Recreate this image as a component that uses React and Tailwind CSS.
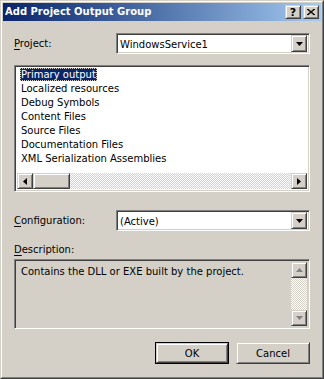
import { useState } from "react";

const items = [
  "Primary output",
  "Localized resources",
  "Debug Symbols",
  "Content Files",
  "Source Files",
  "Documentation Files",
  "XML Serialization Assemblies",
];

const raised =
  "border border-t-[#d4d0c8] border-l-[#d4d0c8] border-b-[#404040] border-r-[#404040] shadow-[inset_1px_1px_#fff,inset_-1px_-1px_#808080] bg-[#d4d0c8]";
const sunken =
  "border border-t-[#808080] border-l-[#808080] border-b-white border-r-white shadow-[inset_1px_1px_#404040,inset_-1px_-1px_#d4d0c8]";
const track =
  "[background-image:repeating-conic-gradient(#d4d0c8_0_25%,#fff_0_50%)] [background-size:2px_2px]";

const Arrow = ({ dir, disabled }) => {
  const pts = {
    down: "0,0 7,0 3.5,4",
    up: "0,4 7,4 3.5,0",
    left: "4,0 4,7 0,3.5",
    right: "0,0 0,7 4,3.5",
  }[dir];
  const vertical = dir === "up" || dir === "down";
  return (
    <svg width={vertical ? 7 : 4} height={vertical ? 4 : 7} className="block">
      <polygon points={pts} fill={disabled ? "#808080" : "#000"} />
    </svg>
  );
};

const ArrowButton = ({ dir, disabled, className = "" }) => (
  <div className={`${raised} w-[16px] h-[16px] flex items-center justify-center shrink-0 ${className}`}>
    <Arrow dir={dir} disabled={disabled} />
  </div>
);

const Combo = ({ value }) => (
  <div className={`${sunken} bg-white w-[194px] h-[21px] flex items-center pl-[3px] pr-[2px]`}>
    <span className="flex-1 pt-[1px]">{value}</span>
    <ArrowButton dir="down" className="h-[17px]" />
  </div>
);

const Label = ({ k, rest }) => (
  <span>
    <span className="underline underline-offset-2">{k}</span>
    {rest}
  </span>
);

export default function App() {
  const [selected, setSelected] = useState(0);

  return (
    <div
      className="w-[324px] h-[379px] bg-[#d4d0c8] border border-t-[#d4d0c8] border-l-[#d4d0c8] border-b-[#404040] border-r-[#404040] text-black text-[10px]"
      style={{ fontFamily: '"DejaVu Sans", Verdana, sans-serif' }}
    >
      <div className="h-full border border-t-white border-l-white border-b-[#808080] border-r-[#808080] p-[1px] flex flex-col">
        {/* title bar */}
        <div className="h-[18px] flex items-center bg-linear-to-r from-[#0a246a] to-[#a6caf0] pl-[2px] pr-[2px]">
          <span className="flex-1 text-white font-bold text-[10px] leading-none">Add Project Output Group</span>
          <div className={`${raised} w-[16px] h-[14px] flex items-center justify-center font-bold text-[11px] leading-none`}>?</div>
          <div className={`${raised} w-[16px] h-[14px] flex items-center justify-center ml-[2px]`}>
            <svg width="8" height="7" className="block">
              <path d="M0 0L7 6M1 0L8 6M7 0L0 6M8 0L1 6" stroke="#000" strokeWidth="1" />
            </svg>
          </div>
        </div>

        <div className="flex-1 px-[11px]">
          {/* project */}
          <div className="flex items-center mt-[12px]">
            <div className="w-[102px]">
              <Label k="P" rest="roject:" />
            </div>
            <Combo value="WindowsService1" />
          </div>

          {/* output list */}
          <div className={`${sunken} bg-white mt-[11px] h-[127px] p-[2px] flex flex-col`}>
            <div className="flex-1 pl-[3px] -mt-[1px]">
              {items.map((it, i) => (
                <div key={it} className="h-[14px] flex items-center" onClick={() => setSelected(i)}>
                  <span
                    className={
                      i === selected
                        ? "bg-[#0a246a] text-white px-[1px] leading-[13px] outline-1 outline-dotted outline-[#d4d0c8] -outline-offset-1"
                        : "px-[1px] leading-[13px]"
                    }
                  >
                    {it}
                  </span>
                </div>
              ))}
            </div>
            <div className="h-[16px] flex">
              <ArrowButton dir="left" />
              <div className={`flex-1 flex ${track}`}>
                <div className={`${raised} w-[37px] h-[16px]`} />
              </div>
              <ArrowButton dir="right" />
            </div>
          </div>

          {/* configuration */}
          <div className="flex items-center mt-[18px]">
            <div className="w-[102px]">
              <Label k="C" rest="onfiguration:" />
            </div>
            <Combo value="(Active)" />
          </div>

          {/* description */}
          <div className="mt-[12px] leading-[13px]">
            <Label k="D" rest="escription:" />
          </div>
          <div className={`${sunken} mt-[3px] h-[70px] p-[2px] flex`}>
            <div className="flex-1 pl-[4px] pt-[2px]">Contains the DLL or EXE built by the project.</div>
            <div className="w-[16px] flex flex-col">
              <ArrowButton dir="up" disabled />
              <div className={`flex-1 ${track}`} />
              <ArrowButton dir="down" disabled />
            </div>
          </div>

          {/* buttons */}
          <div className="flex justify-end gap-[7px] mt-[13px]">
            <div className="border border-black">
              <div className={`${raised} w-[72px] h-[20px] flex items-center justify-center`}>OK</div>
            </div>
            <div className={`${raised} w-[74px] h-[22px] flex items-center justify-center`}>Cancel</div>
          </div>
        </div>
      </div>
    </div>
  );
}
